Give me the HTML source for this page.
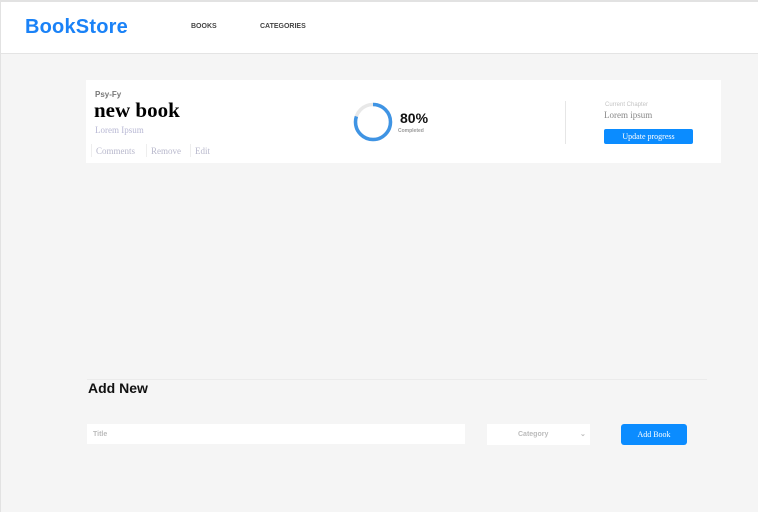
<!DOCTYPE html>
<html><head><meta charset="utf-8"><style>
*{box-sizing:border-box;margin:0;padding:0}
body{width:758px;height:512px;background:#f5f5f5;font-family:"Liberation Sans",sans-serif;position:relative;overflow:hidden}
.hdr{position:absolute;left:1px;top:2px;width:757px;height:52px;background:#fff;border-bottom:1px solid #e4e4e4}
.logo{position:absolute;left:24px;top:14px;font-size:20px;font-weight:bold;color:#1a82f7;letter-spacing:0.2px}
.nav{position:absolute;top:21px;font-size:7px;font-weight:bold;color:#444}
.card{position:absolute;left:86px;top:80px;width:635px;height:83px;background:#fff}
.abs{position:absolute}
.serif{font-family:"Liberation Serif",serif}
.lnk{position:absolute;top:64px;font-size:9px;color:#b8b8cc;font-family:"Liberation Serif",serif;border-left:1px solid #eee;padding-left:4px;height:13px;line-height:14px}
.btn{background:#0b8cff;color:#fff;font-family:"Liberation Serif",serif;font-size:8px;text-align:center;border-radius:2px}
</style></head><body>
<div class="abs" style="left:0;top:0;width:758px;height:2px;background:#e2e2e2"></div>
<div class="abs" style="left:0;top:0;width:1px;height:512px;background:#e2e2e2"></div>
<div class="hdr">
<div class="logo">BookStore</div>
<div class="nav" style="left:190px">BOOKS</div>
<div class="nav" style="left:259px">CATEGORIES</div>
</div>
<div class="card">
<div class="abs" style="left:9px;top:10px;font-size:8px;font-weight:bold;color:#777">Psy-Fy</div>
<div class="abs serif" style="left:8px;top:18px;font-size:21px;font-weight:bold;color:#000">new book</div>
<div class="abs serif" style="left:9px;top:45px;font-size:9px;color:#b8b8d4">Lorem Ipsum</div>
<div class="lnk" style="left:5px">Comments</div>
<div class="lnk" style="left:60px">Remove</div>
<div class="lnk" style="left:104px">Edit</div>
<svg class="abs" style="left:267px;top:22px" width="40" height="40" viewBox="0 0 40 40">
<circle cx="20" cy="20" r="17.5" fill="none" stroke="#e8e8e8" stroke-width="3.5"/>
<circle cx="20" cy="20" r="17.5" fill="none" stroke="#3f94e4" stroke-width="3.5" stroke-dasharray="87.96 109.96" transform="rotate(-90 20 20)"/>
</svg>
<div class="abs" style="left:314px;top:30px;font-size:14px;font-weight:bold;color:#111">80%</div>
<div class="abs" style="left:312px;top:48px;font-size:5px;font-weight:bold;color:#999">Completed</div>
<div class="abs" style="left:479px;top:21px;width:1px;height:43px;background:#e6e6e6"></div>
<div class="abs" style="left:519px;top:22px;font-size:6px;color:#c4c4c4">Current Chapter</div>
<div class="abs serif" style="left:518px;top:30px;font-size:9px;color:#888">Lorem ipsum</div>
<div class="abs btn" style="left:518px;top:49px;width:89px;height:15px;line-height:15px">Update progress</div>
</div>
<div class="abs" style="left:87px;top:379px;width:620px;height:1px;background:#ebebeb"></div>
<div class="abs" style="left:88px;top:380px;font-size:14px;font-weight:bold;color:#111">Add New</div>
<div class="abs" style="left:87px;top:424px;width:378px;height:20px;background:#fff;font-size:7px;color:#bbb;font-weight:bold;padding:7px 6px 0">Title</div>
<div class="abs" style="left:487px;top:424px;width:103px;height:21px;background:#fff;font-size:7px;color:#bbb;font-weight:bold;padding:7px 0 0 31px">Category<span style="position:absolute;left:93px;top:6px;font-size:7px;color:#bbb">&#8964;</span></div>
<div class="abs btn" style="left:621px;top:424px;width:66px;height:21px;line-height:21px;font-size:8px;border-radius:3px">Add Book</div>
</body></html>
